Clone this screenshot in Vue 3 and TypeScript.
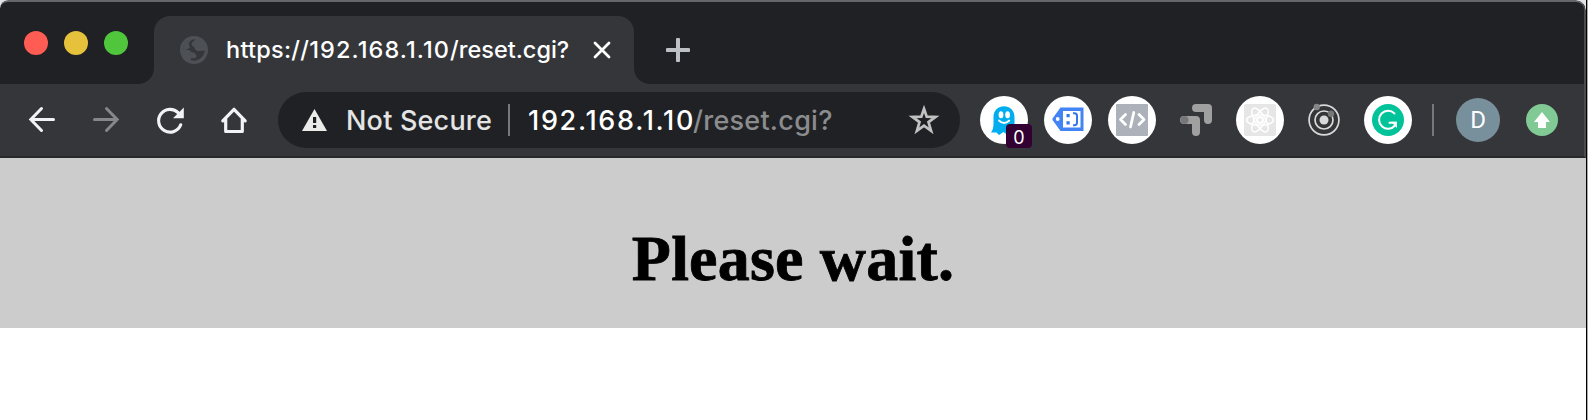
<script setup lang="ts">
const lights: string[] = ['close', 'minimize', 'maximize']
const petals: number[] = [0, 60, 120]
</script>

<template>
  <div class="desktop">
    <div class="window">
      <header class="tabstrip">
        <div class="lights">
          <span v-for="l in lights" :key="l" class="light" :class="l"></span>
        </div>
        <div class="tab">
          <svg class="flare" width="16" height="16" viewBox="0 0 16 16"><path d="M16 0A16 16 0 0 1 0 16H16Z" fill="#35363a" /></svg>
          <svg class="favicon" width="28" height="28" viewBox="0 0 28 28">
            <circle cx="14" cy="14" r="14" fill="#4d5156" />
            <path d="M15.500 3.200C14.500 5.500 12 5.500 11.500 7.500C11.200 9.800 14 10 14.500 11.700C15 14.500 17.500 15.300 19.500 15L24.700 14.500C24.300 20 20 24.500 14 24.800L10.700 24.300V22.200H14C16.500 22.200 17 20 16 18.700C15 17.300 14 16.500 11.500 16.200C10.500 14 8.500 13.700 3.300 13.700C3.500 8 8.500 3.200 15.500 3.200Z" fill="#35363a" />
            <path d="M3.300 14C3.300 8.500 7.500 4.200 12 3.400C9.500 6 7.800 7.500 9.200 9.800C11 11 9.500 13.500 3.300 14Z" fill="#4d5156" />
          </svg>
          <span class="title"><span class="scheme">https://</span><span class="address">192.168.1.10</span>/reset.cgi?</span>
          <svg class="close-tab" width="18" height="18" viewBox="0 0 18 18"><path d="M2 2 16 16M16 2 2 16" stroke="#fff" stroke-width="2.800" stroke-linecap="round" /></svg>
          <svg class="flare" width="16" height="16" viewBox="0 0 16 16"><path d="M0 0A16 16 0 0 0 16 16H0Z" fill="#35363a" /></svg>
        </div>
        <svg class="new-tab" width="24" height="24" viewBox="0 0 24 24"><path d="M12 1.500V22.500M1.500 12H22.500" stroke="#bdc1c6" stroke-width="4" stroke-linecap="round" /></svg>
      </header>

      <nav class="toolbar">
        <div class="navigation">
          <svg width="32" height="32" viewBox="0 0 32 32" fill="none" stroke="#f1f3f4" stroke-width="3" stroke-linecap="round" stroke-linejoin="miter"><path d="M27.500 15.500H5M15.500 4.500 4.800 15.500 15.500 26.500" /></svg>
          <svg width="32" height="32" viewBox="0 0 32 32" fill="none" stroke="#86878a" stroke-width="3" stroke-linecap="round"><path d="M4.500 15.500H27M16.500 4.500 27.200 15.500 16.500 26.500" /></svg>
          <svg width="32" height="32" viewBox="0 0 32 32"><path d="M26.700 20.800A11.400 11.400 0 1 1 24.300 8.900" fill="none" stroke="#f1f3f4" stroke-width="3.200" stroke-linecap="round" /><path d="M29.800 3.500V14.300H19Z" fill="#f1f3f4" /></svg>
          <svg width="32" height="32" viewBox="0 0 32 32" fill="none" stroke="#f1f3f4" stroke-width="3.200" stroke-linejoin="round" stroke-linecap="round"><path d="M4.800 16.800 16 5.300 27.200 16.800M7.700 15V27.500H24.300V15" /></svg>
        </div>

        <div class="omnibox">
          <svg class="warning" width="26" height="22" viewBox="0 0 26 22"><path d="M12.500 0 25 22H0Z" fill="#ebebea" /><path d="M11 8H14.200V14H11ZM11 16H14.200V19H11Z" fill="#202124" /></svg>
          <span class="security">Not Secure</span>
          <span class="divider"></span>
          <span class="host">192.168.1.10</span><span class="path">/reset.cgi?</span>
          <svg class="star" width="32" height="32" viewBox="0 0 32 32"><path d="M16 4.800 18.700 12.700 27.500 12.900 20.500 18.100 23.100 26.800 16 21.700 8.900 26.800 11.500 18.100 4.500 12.900 13.300 12.700Z" fill="none" stroke="#c2c2c2" stroke-width="2.700" /></svg>
        </div>

        <div class="extensions">
          <span class="ext disc">
            <svg width="48" height="48" viewBox="0 0 48 48"><path d="M13.500 21C13.500 6.500 34.500 6.500 34.500 21V31L37 37 31 36.500 27.500 39 23.500 36 19 39 16.500 36.500 11 36.500C13 34 13.500 31 13.500 27Z" fill="#00aef0" /><g fill="#fff"><ellipse cx="21" cy="18.800" rx="2.400" ry="3.500" /><ellipse cx="27.600" cy="18.800" rx="2.400" ry="3.500" /></g><path d="M19 24.500Q24 29.500 29.300 24.500" fill="none" stroke="#fff" stroke-width="1.800" stroke-linecap="round" /></svg>
            <span class="badge">0</span>
          </span>
          <span class="ext disc">
            <svg width="48" height="48" viewBox="0 0 48 48"><path d="M16.500 11.500H39.500V35H16.500L8.500 24V22.500Z" fill="#4384f5" /><circle cx="13.700" cy="23" r="1.900" fill="#fff" /><rect x="19" y="15" width="17.500" height="16.500" fill="#fff" /><path d="M22.500 18H25.700V21.200H22.500ZM22.500 25.300H25.700V28.500H22.500Z" fill="#3477ed" /><path d="M29 17.200H30.500Q33 17.200 33 19.700V26.500Q33 29.200 30.500 29.200H29" fill="none" stroke="#3477ed" stroke-width="2" /></svg>
          </span>
          <span class="ext disc">
            <svg width="48" height="48" viewBox="0 0 48 48"><rect x="8" y="8" width="32" height="32" rx="1" fill="#adb1ba" /><path d="M17.500 18.500 12.500 23.500 17.500 28.500M31 18.500 36 23.500 31 28.500M25.800 16.500 22.500 31" fill="none" stroke="#fff" stroke-width="2.800" stroke-linecap="round" stroke-linejoin="round" /></svg>
          </span>
          <span class="ext">
            <svg width="48" height="48" viewBox="0 0 48 48" fill="none" stroke="#a0a0a0" stroke-width="8"><path d="M24 12H36V24" stroke-linecap="round" stroke-linejoin="round" /><path d="M12 24H24V36" stroke-linecap="round" stroke-linejoin="round" /><circle cx="12.500" cy="24" r="4" fill="#777" stroke="none" /></svg>
          </span>
          <span class="ext disc">
            <svg width="48" height="48" viewBox="0 0 48 48"><rect x="8" y="8" width="32" height="32" rx="2" fill="#e6e6e6" /><g fill="none" stroke="#fff" stroke-width="1.500"><ellipse v-for="angle in petals" :key="angle" cx="24" cy="24" rx="13.500" ry="5.300" :transform="`rotate(${angle} 24 24)`" /><circle cx="24" cy="24" r="2.900" stroke-width="2.200" /></g></svg>
          </span>
          <span class="ext">
            <svg width="48" height="48" viewBox="0 0 48 48"><g fill="none" stroke="#dadada" stroke-width="1.700"><circle cx="24" cy="24" r="14.900" /><circle cx="24" cy="24" r="9" /></g><circle cx="24" cy="24" r="4.500" fill="#dadada" /><circle cx="16.700" cy="11" r="3.200" fill="#858585" /><circle cx="31" cy="17.700" r="3.200" fill="#777" /></svg>
          </span>
          <span class="ext disc">
            <svg width="48" height="48" viewBox="0 0 48 48"><circle cx="24" cy="24" r="16" fill="#00c39a" /><path d="M30.500 17.500A9 9 0 1 0 31 29.500M25.500 26.700H32" fill="none" stroke="#fff" stroke-width="2" stroke-linecap="round" /><path d="M27 25.700H33V32Z" fill="#fff" /></svg>
          </span>
        </div>
        <span class="divider tools"></span>
        <span class="avatar">D</span>
        <svg class="update" width="32" height="32" viewBox="0 0 32 32"><circle cx="16" cy="16" r="16" fill="#81c995" /><path d="M16 8 24 18H20V24H12V18H8Z" fill="#fff" /></svg>
      </nav>

      <main class="page">
        <div class="banner"><h1>Please wait.</h1></div>
      </main>
    </div>
  </div>
</template>

<style>
body { margin: 0; background: #fff; }
</style>

<style scoped>
.desktop {
  width: 1588px;
  height: 420px;
  box-sizing: border-box;
  padding-right: 2px;
  overflow: hidden;
  background: linear-gradient(90deg, #e3e3e5 1586px, #000 1586px, #000 1587px, #a9a9a9 1587px);
  font-family: Inter, "Liberation Sans", sans-serif;
}
.window {
  height: 420px;
  overflow: hidden;
  border-radius: 8px 10px 0 0;
  background: #fff;
}
.tabstrip {
  display: flex;
  box-sizing: border-box;
  height: 84px;
  border-top: 2px solid #64666a;
  border-right: 2px solid #4b4c50;
  border-radius: 8px 10px 0 0;
  background: #202124;
}
.lights { display: flex; gap: 16px; padding: 29px 26px 0 24px; }
.light { width: 24px; height: 24px; border-radius: 50%; }
.close { background: #ff5c54; }
.minimize { background: #e6c13c; }
.maximize { background: #4fc63c; }
.tab {
  display: flex;
  align-items: center;
  box-sizing: border-box;
  width: 480px;
  height: 68px;
  margin-top: 14px;
  border-radius: 16px 16px 0 0;
  background: #35363a;
}
.flare { flex: none; align-self: flex-end; margin-left: -16px; }
.flare:last-child { margin: 0 -16px 0 auto; }
.favicon { flex: none; margin-left: 26px; }
.title {
  width: 367px;
  margin: -2px 0 0 18px;
  white-space: nowrap;
  color: #fff;
  font-size: 23.500px;
  font-weight: 500;
}
.scheme { letter-spacing: 0.25px; }
.address { letter-spacing: 1.100px; }
.close-tab { flex: none; }
.new-tab { margin: 36px 0 0 32px; }
.toolbar {
  display: flex;
  align-items: center;
  box-sizing: border-box;
  height: 74px;
  border-right: 2px solid #4b4c50;
  border-bottom: 2px solid #28292b;
  background: #35363a;
}
.navigation { display: flex; gap: 32px; padding-left: 26px; }
.omnibox {
  display: flex;
  align-items: center;
  box-sizing: border-box;
  width: 682px;
  height: 56px;
  margin-left: 28px;
  padding-left: 24px;
  border-radius: 28px;
  background: #202124;
  white-space: nowrap;
  font-size: 27px;
  font-weight: 500;
}
.warning { flex: none; }
.security { width: 162px; margin-left: 18px; color: #e4e4e4; letter-spacing: 0.200px; }
.divider { flex: none; width: 2px; height: 32px; background: #77787a; }
.host { width: 165px; margin-left: 18px; color: #fff; letter-spacing: 1.700px; }
.path { color: #8b8c8e; letter-spacing: 0.250px; }
.star { margin: 0 20px 0 auto; }
.extensions { display: flex; gap: 16px; margin-left: 20px; }
.ext { position: relative; width: 48px; height: 48px; border-radius: 50%; }
.ext svg { display: block; }
.disc { background: #fff; }
.badge {
  position: absolute;
  left: 26px;
  top: 28px;
  width: 26px;
  height: 24px;
  border-radius: 4px;
  background: #330033;
  color: #fff;
  font-size: 18px;
  line-height: 27px;
  text-align: center;
}
.tools { margin: 0 22px 0 20px; }
.avatar {
  width: 44px;
  height: 44px;
  border-radius: 50%;
  background: #78909c;
  color: #fff;
  font: 24px/45px Roboto, sans-serif;
  text-align: center;
}
.update { margin-left: 26px; }
.banner {
  display: flex;
  justify-content: center;
  height: 170px;
  background: #ccc;
}
h1 {
  margin: 64px 0 0;
  color: #000;
  font: bold 64px/74px "Liberation Serif", serif;
  letter-spacing: 0.200px;
  -webkit-text-stroke: 0.800px #000;
}
</style>
